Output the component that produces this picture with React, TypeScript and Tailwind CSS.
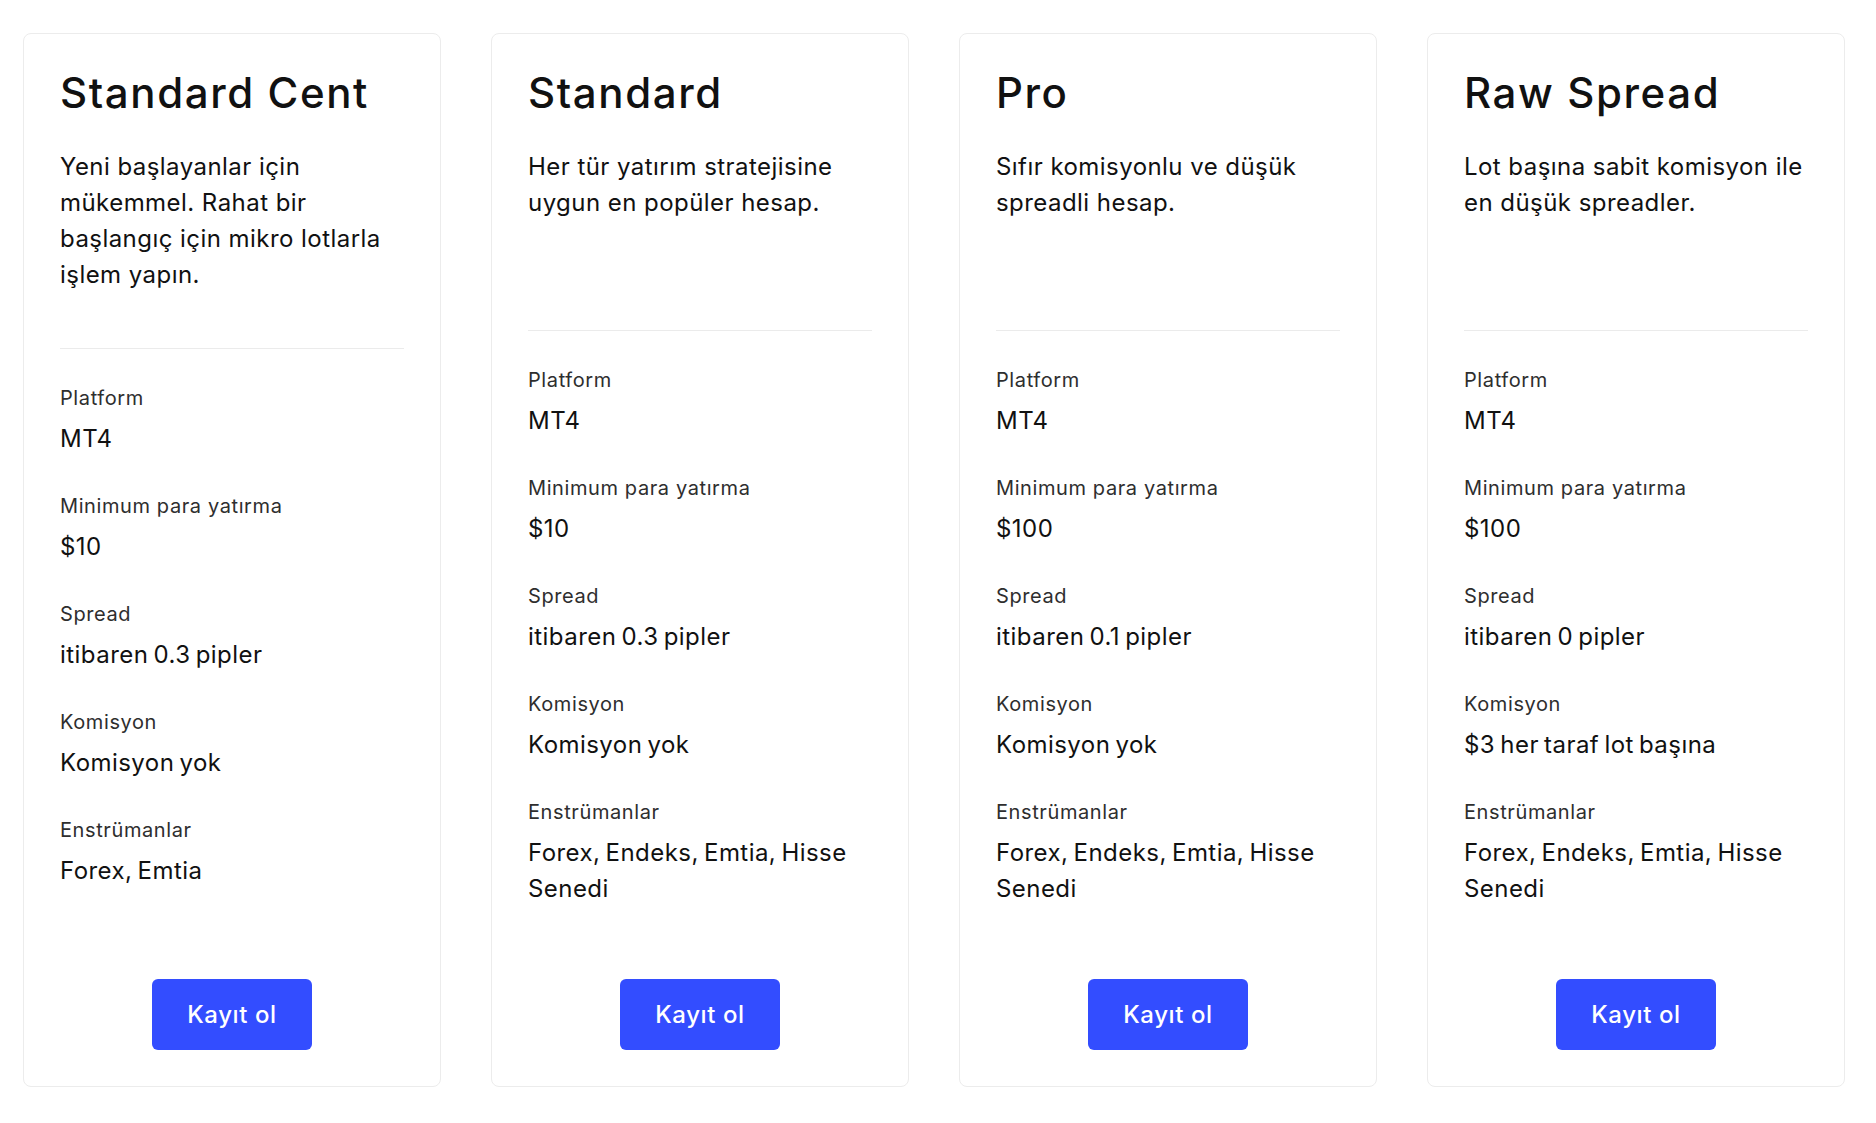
import React from "react";

type Plan = {
  title: string;
  desc: string[];
  specs: { label: string; value: string[] }[];
};

const plans: Plan[] = [
  {
    title: "Standard Cent",
    desc: [
      "Yeni başlayanlar için",
      "mükemmel. Rahat bir",
      "başlangıç için mikro lotlarla",
      "işlem yapın.",
    ],
    specs: [
      { label: "Platform", value: ["MT4"] },
      { label: "Minimum para yatırma", value: ["$10"] },
      { label: "Spread", value: ["itibaren 0.3 pipler"] },
      { label: "Komisyon", value: ["Komisyon yok"] },
      { label: "Enstrümanlar", value: ["Forex, Emtia"] },
    ],
  },
  {
    title: "Standard",
    desc: ["Her tür yatırım stratejisine", "uygun en popüler hesap."],
    specs: [
      { label: "Platform", value: ["MT4"] },
      { label: "Minimum para yatırma", value: ["$10"] },
      { label: "Spread", value: ["itibaren 0.3 pipler"] },
      { label: "Komisyon", value: ["Komisyon yok"] },
      { label: "Enstrümanlar", value: ["Forex, Endeks, Emtia, Hisse", "Senedi"] },
    ],
  },
  {
    title: "Pro",
    desc: ["Sıfır komisyonlu ve düşük", "spreadli hesap."],
    specs: [
      { label: "Platform", value: ["MT4"] },
      { label: "Minimum para yatırma", value: ["$100"] },
      { label: "Spread", value: ["itibaren 0.1 pipler"] },
      { label: "Komisyon", value: ["Komisyon yok"] },
      { label: "Enstrümanlar", value: ["Forex, Endeks, Emtia, Hisse", "Senedi"] },
    ],
  },
  {
    title: "Raw Spread",
    desc: ["Lot başına sabit komisyon ile", "en düşük spreadler."],
    specs: [
      { label: "Platform", value: ["MT4"] },
      { label: "Minimum para yatırma", value: ["$100"] },
      { label: "Spread", value: ["itibaren 0 pipler"] },
      { label: "Komisyon", value: ["$3 her taraf lot başına"] },
      { label: "Enstrümanlar", value: ["Forex, Endeks, Emtia, Hisse", "Senedi"] },
    ],
  },
];

function Card({ plan }: { plan: Plan }) {
  return (
    <div className="flex w-[418px] flex-col rounded-[8px] border border-[#ececec] bg-white px-[36px] pt-[36px] pb-[36px]">
      <h2 className="text-[42px] leading-[45px] font-medium text-[#111111] tracking-[1.6px]">
        {plan.title}
      </h2>
      <p className="mt-[34px] min-h-[126px] text-[24px] leading-[36px] text-[#111111] tracking-[0.45px]">
        {plan.desc.map((l, i) => (
          <span key={i} className="block whitespace-nowrap">
            {l}
          </span>
        ))}
      </p>
      <div className="mt-[55px] h-px bg-[#ebebeb]" />
      <div className="flex flex-col gap-[35px] pt-[35px] pb-[72px]">
        {plan.specs.map((s) => (
          <div key={s.label} className="flex flex-col">
            <div className="text-[20px] leading-[28px] text-[#2e2e2e] tracking-[0.6px]">{s.label}</div>
            <div className="mt-[9px] text-[24px] leading-[36px] text-[#111111] tracking-[0.45px] [word-spacing:-2px]">
              {s.value.map((v, i) => (
                <span key={i} className="block whitespace-nowrap">
                  {v}
                </span>
              ))}
            </div>
          </div>
        ))}
      </div>
      <div className="mt-auto flex justify-center">
        <button className="h-[71px] w-[160px] rounded-[6px] bg-[#334dff] text-[24px] font-medium text-white tracking-[0.6px]">
          Kayıt ol
        </button>
      </div>
    </div>
  );
}

export default function App() {
  return (
    <div
      className="min-h-[1123px] w-full bg-white pl-[23px] pt-[33px]"
      style={{ fontFamily: "Inter, 'Noto Sans', sans-serif" }}
    >
      <div className="flex items-stretch gap-[50px]">
        {plans.map((p) => (
          <Card key={p.title} plan={p} />
        ))}
      </div>
    </div>
  );
}
